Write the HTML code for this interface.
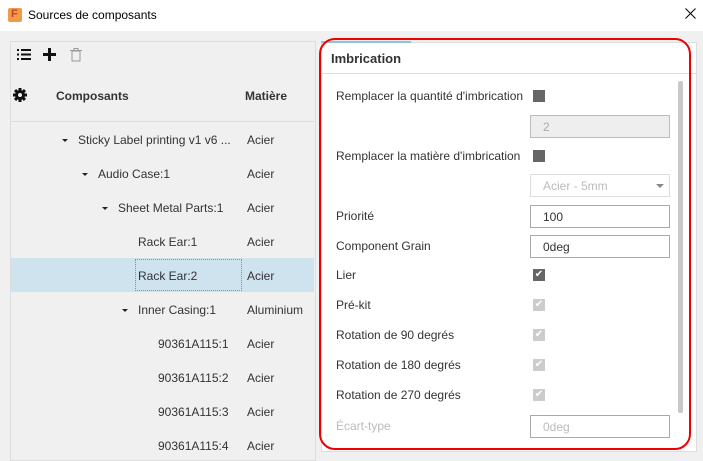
<!DOCTYPE html>
<html><head><meta charset="utf-8"><style>
*{box-sizing:border-box;margin:0;padding:0}
body{width:703px;height:452px;overflow:hidden;background:#f0f0f0;font-family:"Liberation Sans",sans-serif;font-size:12px;color:#333;position:relative}
.a{position:absolute;white-space:nowrap}
.t{top:0;left:0;width:703px;height:31px;background:#fff}
.row{position:absolute;left:11px;width:303px;height:34px}
.lbl{position:absolute;left:336px;font-size:12px;color:#333}
.cb{position:absolute;left:533px;width:12px;height:12px;background:#666}
.cbd{background:#ccc}
.inp{position:absolute;left:530px;width:140px;height:23px;border:1px solid #aaa;background:#fff;padding:4px 0 0 12px;font-size:12px;color:#333}
.ar{position:absolute;width:0;height:0;border-left:3px solid transparent;border-right:3px solid transparent;border-top:3px solid #222}
</style></head><body>
<div class="a t"></div>
<div class="a" style="left:8px;top:8px;width:14px;height:14px;background:#f39a45;border-radius:2px"><span style="position:absolute;left:3px;top:0;color:#b43;font-size:11px;font-weight:bold">F</span></div>
<div class="a" style="left:28px;top:8px;font-size:12px;color:#000">Sources de composants</div>
<svg class="a" style="left:685px;top:8px" width="11" height="11"><path d="M0.5 0.5L10.5 10.5M10.5 0.5L0.5 10.5" stroke="#000" stroke-width="1"/></svg>

<div class="a" style="left:10px;top:41px;width:306px;height:420px;border:1px solid #ddd;background:#f0f0f0"></div>
<svg class="a" style="left:17px;top:49px" width="14" height="11"><g fill="#111"><rect x="0" y="0" width="2" height="2"/><rect x="0" y="4.5" width="2" height="2"/><rect x="0" y="9" width="2" height="2"/><rect x="4" y="0" width="10" height="2"/><rect x="4" y="4.5" width="10" height="2"/><rect x="4" y="9" width="10" height="2"/></g></svg>
<svg class="a" style="left:43px;top:48px" width="13" height="13"><rect x="5" y="0" width="3" height="13" fill="#111"/><rect x="0" y="5" width="13" height="3" fill="#111"/></svg>
<svg class="a" style="left:70px;top:48px" width="12" height="14"><rect x="2" y="3" width="8" height="10" fill="none" stroke="#999"/><line x1="0" y1="2.5" x2="12" y2="2.5" stroke="#999"/><rect x="4" y="0.5" width="4" height="2" fill="none" stroke="#999"/></svg>
<svg class="a" style="left:13px;top:88px" width="14" height="14" viewBox="0 0 14 14"><g fill="#111"><circle cx="7" cy="7" r="5"/><rect x="5.5" y="0" width="3" height="14"/><rect x="0" y="5.5" width="14" height="3"/><rect x="5.5" y="0" width="3" height="14" transform="rotate(45 7 7)"/><rect x="5.5" y="0" width="3" height="14" transform="rotate(-45 7 7)"/></g><circle cx="7" cy="7" r="2" fill="#f0f0f0"/></svg>
<div class="a" style="left:56px;top:89px;font-weight:bold;font-size:12px">Composants</div>
<div class="a" style="left:245px;top:89px;font-weight:bold;font-size:12px">Matière</div>
<div class="a" style="left:11px;top:121px;width:303px;height:1px;background:#ddd"></div>
<div class="row" style="top:258px;background:#cfe3ef"></div>
<div class="a" style="left:135px;top:259px;width:107px;height:32px;border:1px dotted #e07040"></div>

<div class="a" style="left:321px;top:42px;width:376px;height:410px;background:#fff;border:1px solid #ddd"></div>
<div class="a" style="left:321px;top:41px;width:90px;height:2px;background:#8ec4e0"></div>
<div class="a" style="left:331px;top:51px;font-weight:bold;font-size:13px">Imbrication</div>
<div class="a" style="left:321px;top:73px;width:376px;height:1px;background:#ddd"></div>
<div class="a" style="left:678px;top:81px;width:5px;height:332px;background:#c8c8c8;border-radius:2px"></div>

<div class="lbl" style="top:89px">Remplacer la quantité d'imbrication</div><div class="cb" style="top:90px"></div>
<div class="inp" style="top:115px;background:#eee;border-color:#bbb;color:#aaa">2</div>
<div class="lbl" style="top:149px">Remplacer la matière d'imbrication</div><div class="cb" style="top:150px"></div>
<div class="inp" style="top:174px;border-color:#ddd;color:#bbb">Acier - 5mm<span style="position:absolute;right:5px;top:9px;width:0;height:0;border-left:4px solid transparent;border-right:4px solid transparent;border-top:4px solid #888"></span></div>
<div class="lbl" style="top:209px">Priorité</div><div class="inp" style="top:205px">100</div>
<div class="lbl" style="top:239px">Component Grain</div><div class="inp" style="top:235px">0deg</div>
<div class="lbl" style="top:268px">Lier</div><div class="cb" style="top:269px;color:#fff;font-size:10px;line-height:12px;text-align:center">✔</div>
<div class="lbl" style="top:298px">Pré-kit</div><div class="cb cbd" style="top:299px;color:#fff;font-size:10px;line-height:12px;text-align:center">✔</div>
<div class="lbl" style="top:328px">Rotation de 90 degrés</div><div class="cb cbd" style="top:329px;color:#fff;font-size:10px;line-height:12px;text-align:center">✔</div>
<div class="lbl" style="top:358px">Rotation de 180 degrés</div><div class="cb cbd" style="top:359px;color:#fff;font-size:10px;line-height:12px;text-align:center">✔</div>
<div class="lbl" style="top:388px">Rotation de 270 degrés</div><div class="cb cbd" style="top:389px;color:#fff;font-size:10px;line-height:12px;text-align:center">✔</div>
<div class="lbl" style="top:419px;color:#bbb">Écart-type</div><div class="inp" style="top:415px;border-color:#aaa;color:#bbb">0deg</div>

<div class="a" style="left:319px;top:38px;width:372px;height:412px;border:2px solid #e00;border-radius:16px"></div>

<div class="ar" style="left:62px;top:139px"></div><div class="a" style="left:78px;top:133px">Sticky Label printing v1 v6 ...</div><div class="a" style="left:247px;top:133px">Acier</div>
<div class="ar" style="left:82px;top:173px"></div><div class="a" style="left:98px;top:167px">Audio Case:1</div><div class="a" style="left:247px;top:167px">Acier</div>
<div class="ar" style="left:102px;top:207px"></div><div class="a" style="left:118px;top:201px">Sheet Metal Parts:1</div><div class="a" style="left:247px;top:201px">Acier</div>
<div class="a" style="left:138px;top:235px">Rack Ear:1</div><div class="a" style="left:247px;top:235px">Acier</div>
<div class="a" style="left:138px;top:269px">Rack Ear:2</div><div class="a" style="left:247px;top:269px">Acier</div>
<div class="ar" style="left:122px;top:309px"></div><div class="a" style="left:138px;top:303px">Inner Casing:1</div><div class="a" style="left:247px;top:303px">Aluminium</div>
<div class="a" style="left:158px;top:337px">90361A115:1</div><div class="a" style="left:247px;top:337px">Acier</div>
<div class="a" style="left:158px;top:371px">90361A115:2</div><div class="a" style="left:247px;top:371px">Acier</div>
<div class="a" style="left:158px;top:405px">90361A115:3</div><div class="a" style="left:247px;top:405px">Acier</div>
<div class="a" style="left:158px;top:439px">90361A115:4</div><div class="a" style="left:247px;top:439px">Acier</div>
</body></html>
